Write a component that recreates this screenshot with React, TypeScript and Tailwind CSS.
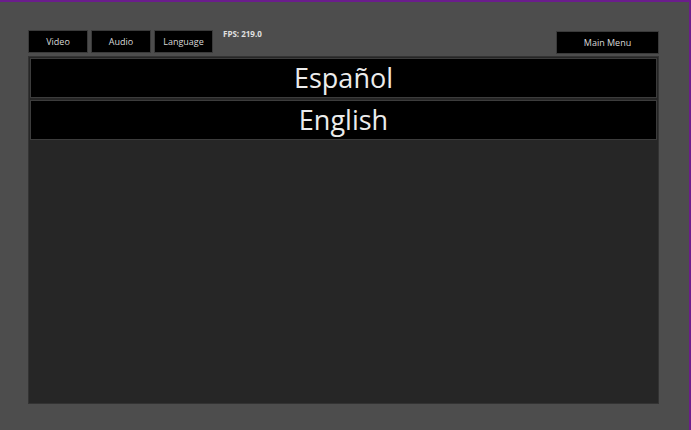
import React from "react";

const languages = ["Español", "English"];

const TabButton: React.FC<{ label: string; className?: string }> = ({
  label,
  className = "",
}) => (
  <button
    className={
      "h-[23px] bg-black border border-[#3a3a3a] text-[9px] text-[#d8d8d8] flex items-center justify-center " +
      className
    }
  >
    {label}
  </button>
);

export default function App() {
  return (
    <div
      className="w-[691px] h-[430px] bg-[#4d4d4d] border-t-2 border-r-2 border-[#6b1d8c] pl-[28px] pr-[30px] pt-[28px] flex flex-col"
      style={{ fontFamily: '"Open Sans", "Noto Sans", sans-serif' }}
    >
      <div className="flex items-start h-[26px]">
        <div className="flex gap-[3px]">
          <TabButton label="Video" className="w-[60px]" />
          <TabButton label="Audio" className="w-[60px]" />
          <TabButton label="Language" className="w-[59px]" />
        </div>
        <span className="ml-[10px] -mt-[1px] text-[8px] font-bold text-[#e0e0e0] leading-[10px]">
          FPS: 219.0
        </span>
        <TabButton label="Main Menu" className="ml-auto w-[103px] mt-[1px] h-[22px]" />
      </div>
      <div className="h-[348px] bg-[#262626] border border-[#333333] p-[1px] flex flex-col gap-[2px]">
        {languages.map((lang) => (
          <div
            key={lang}
            className="h-[40px] bg-black border border-[#3c3c3c] flex items-center justify-center text-[27px] leading-none pb-[2px] text-[#ececec]"
          >
            {lang}
          </div>
        ))}
      </div>
    </div>
  );
}
